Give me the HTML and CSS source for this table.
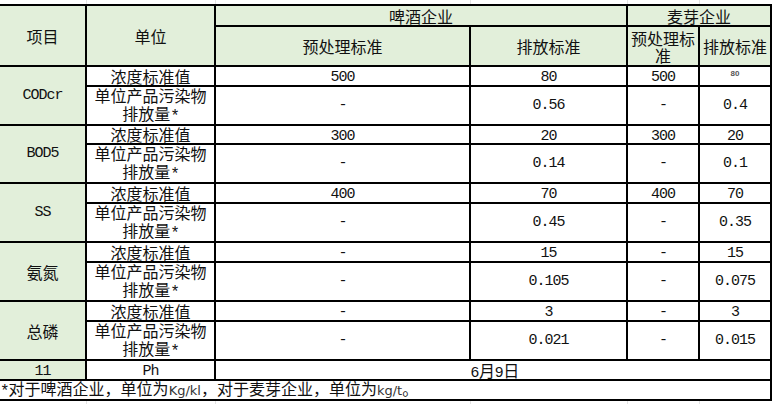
FILE: index.html
```html
<!DOCTYPE html>
<html lang="zh-CN">
<head>
<meta charset="utf-8">
<title>表</title>
<link rel="stylesheet" href="styles.css">
</head>
<body>
<div class="sheet">
  <div class="c hd span-r2">项目</div>
  <div class="c hd span-r2">单位</div>
  <div class="c hd span-c2">啤酒企业</div>
  <div class="c hd span-c2">麦芽企业</div>
  <div class="c hd">预处理标准</div>
  <div class="c hd">排放标准</div>
  <div class="c hd wrap">预处理标准</div>
  <div class="c hd">排放标准</div>

  <div class="c item span-r2">CODcr</div>
  <div class="c unit">浓度标准值</div>
  <div class="c num short">500</div>
  <div class="c num short">80</div>
  <div class="c num short">500</div>
  <div class="c num tiny">80</div>
  <div class="c unit"><span class="t">单位产品污染物<br>排放量<span class="ast">*</span></span></div>
  <div class="c num">-</div>
  <div class="c num">0.56</div>
  <div class="c num">-</div>
  <div class="c num">0.4</div>

  <div class="c item span-r2">BOD5</div>
  <div class="c unit">浓度标准值</div>
  <div class="c num short">300</div>
  <div class="c num short">20</div>
  <div class="c num short">300</div>
  <div class="c num short">20</div>
  <div class="c unit"><span class="t">单位产品污染物<br>排放量<span class="ast">*</span></span></div>
  <div class="c num">-</div>
  <div class="c num">0.14</div>
  <div class="c num">-</div>
  <div class="c num">0.1</div>

  <div class="c item span-r2">SS</div>
  <div class="c unit">浓度标准值</div>
  <div class="c num short">400</div>
  <div class="c num short">70</div>
  <div class="c num short">400</div>
  <div class="c num short">70</div>
  <div class="c unit"><span class="t">单位产品污染物<br>排放量<span class="ast">*</span></span></div>
  <div class="c num">-</div>
  <div class="c num">0.45</div>
  <div class="c num">-</div>
  <div class="c num">0.35</div>

  <div class="c item cjk span-r2">氨氮</div>
  <div class="c unit">浓度标准值</div>
  <div class="c num short">-</div>
  <div class="c num short">15</div>
  <div class="c num short">-</div>
  <div class="c num short">15</div>
  <div class="c unit"><span class="t">单位产品污染物<br>排放量<span class="ast">*</span></span></div>
  <div class="c num">-</div>
  <div class="c num">0.105</div>
  <div class="c num">-</div>
  <div class="c num">0.075</div>

  <div class="c item cjk span-r2">总磷</div>
  <div class="c unit">浓度标准值</div>
  <div class="c num short">-</div>
  <div class="c num short">3</div>
  <div class="c num short">-</div>
  <div class="c num short">3</div>
  <div class="c unit"><span class="t">单位产品污染物<br>排放量<span class="ast">*</span></span></div>
  <div class="c num">-</div>
  <div class="c num">0.021</div>
  <div class="c num">-</div>
  <div class="c num">0.015</div>

  <div class="c item num short">11</div>
  <div class="c num short">Ph</div>
  <div class="c date span-c4"><span class="t"><span class="d">6</span>月<span class="d">9</span>日</span></div>

  <div class="c note span-c6"><span class="t"><span class="ast">*</span>对于啤酒企业，单位为<span class="lat">Kg/kl</span>，对于麦芽企业，单位为<span class="lat">kg/t</span>。</span></div>
</div>
</body>
</html>
```
FILE: styles.css
```css
html, body {
  margin: 0;
  padding: 0;
}
body {
  width: 774px;
  height: 404px;
  overflow: hidden;
  background-color: #fff;
  background-image:
    linear-gradient(#e3e3e3, #e3e3e3),
    linear-gradient(#e3e3e3, #e3e3e3),
    linear-gradient(#e3e3e3, #e3e3e3),
    linear-gradient(#e3e3e3, #e3e3e3),
    linear-gradient(#e3e3e3, #e3e3e3);
  background-size: 1px 100%;
  background-repeat: no-repeat;
  background-position: 86px 0, 215px 0, 470px 0, 627px 0, 699px 0;
  font-family: "Noto Sans CJK SC", "Noto Sans", sans-serif;
  color: #111;
}
.sheet {
  margin-top: 4px;
  width: 770px;
  display: grid;
  grid-template-columns: 85px 127px 253px 155px 70px 70px;
  grid-template-rows: 19px 38px 18px 37px 17px 37px 18px 37px 18px 37px 18px 37px 18px 18px;
  gap: 2px;
  padding: 2px 2px 2px 0;
  background: #000;
}
.c {
  background: #fff;
  display: flex;
  align-items: center;
  justify-content: center;
  text-align: center;
  font-size: 16px;
  line-height: 18px;
  white-space: nowrap;
  min-width: 0;
  min-height: 0;
}
.t {
  display: block;
}
.hd {
  background: #e2efda;
}
.wrap {
  white-space: normal;
  line-height: 17px;
  padding-top: 2px;
}
.span-r2 { grid-row: span 2; }
.span-c2 { grid-column: span 2; }
.span-c4 { grid-column: span 4; }
.span-c6 { grid-column: span 6; }
.item {
  background: #e2efda;
  font-family: "Liberation Mono", monospace;
  font-size: 15px;
  letter-spacing: -1px;
}
.item.cjk {
  font-family: "Noto Sans CJK SC", sans-serif;
  font-size: 16px;
  letter-spacing: 0;
}
.unit {
  align-items: flex-end;
}
.ast {
  font-family: "Liberation Mono", monospace;
  font-size: 16px;
  line-height: 1;
  letter-spacing: -1px;
  position: relative;
  top: 1px;
}
.num {
  font-family: "Liberation Mono", monospace;
  font-size: 15px;
  letter-spacing: -1px;
}
.short {
  padding-top: 2px;
  align-items: flex-start;
}
.tiny {
  font-family: "Liberation Sans", sans-serif;
  font-size: 8px;
  font-weight: bold;
  color: #555;
  align-items: flex-start;
  padding-top: 2px;
  line-height: 10px;
  letter-spacing: 0;
}
.date {
  align-items: flex-end;
  padding-left: 4px;
}
.d {
  font-family: "Liberation Sans", sans-serif;
  font-size: 15px;
  line-height: 1;
}
.note {
  justify-content: flex-start;
  align-items: flex-end;
  text-align: left;
}
.lat {
  font-family: "DejaVu Sans", sans-serif;
  font-size: 13px;
  line-height: 1;
  color: #333;
}
```
